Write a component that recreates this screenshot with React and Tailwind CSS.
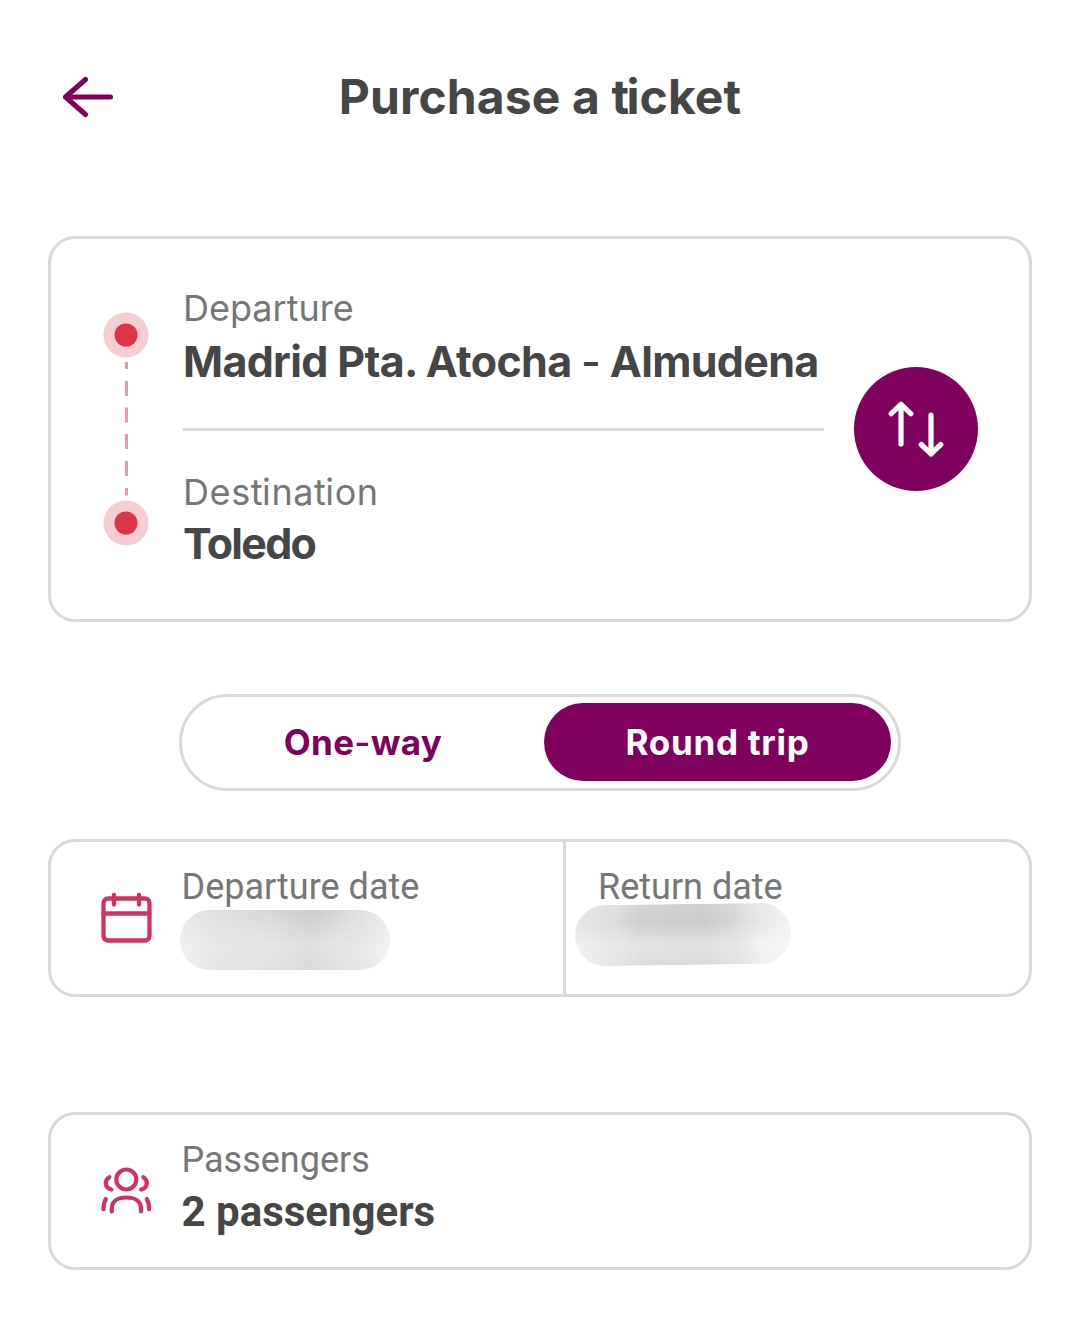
function BackArrow() {
  return (
    <svg className="w-[52px] h-[42px]" viewBox="0 0 52 42" fill="none" stroke="#80005e" strokeWidth="5" strokeLinecap="round" strokeLinejoin="round">
      <path d="M48.500 21H3.500M23.500 3.500L3.500 21l20 17.500" />
    </svg>
  );
}

function RouteLine() {
  return (
    <svg className="w-[46px] h-[234px]" viewBox="0 0 46 234" fill="none">
      <circle cx="23" cy="23" r="22.5" fill="#f6cdd2" />
      <circle cx="23" cy="23" r="11.5" fill="#dc3545" />
      <path
        d="M23.5 50v7M23.5 69v15M23.5 95.5v15M23.5 122v15M23.5 149v15M23.5 176v7.5"
        stroke="#e29fa5"
        strokeWidth="3"
      />
      <circle cx="23" cy="211" r="22.5" fill="#f6cdd2" />
      <circle cx="23" cy="211" r="11.5" fill="#dc3545" />
    </svg>
  );
}

function SwapIcon() {
  return (
    <svg className="w-[56px] h-[56px]" viewBox="0 0 56 56" fill="none" stroke="#ffffff" strokeWidth="5.2" strokeLinecap="round" strokeLinejoin="round">
      <path d="M13 43V4M3.2 12.700L13 3.300l9.800 9.400" />
      <path d="M43 14v39M33.2 43.500l9.800 9.400 9.800-9.400" />
    </svg>
  );
}

function CalendarIcon() {
  return (
    <svg className="w-[52px] h-[52px]" viewBox="0 0 52 52" fill="none" stroke="#d03363" strokeWidth="4.3" strokeLinecap="round">
      <rect x="3.5" y="6.5" width="46" height="42" rx="4.5" />
      <path d="M3.500 21.500h46M14 3V12.500M39 3V12.500" />
    </svg>
  );
}

function PeopleIcon() {
  return (
    <svg className="w-[52px] h-[48px]" viewBox="0 0 52 48" fill="none" stroke="#d03363" strokeWidth="4.2" strokeLinecap="round">
      <circle cx="26.3" cy="12.500" r="10" />
      <path d="M11.800 44.500v-3C11.800 34 18 30.500 26.300 30.500S41 34 41 41.500v3" />
      <path d="M9.300 10.200c-5 3-5 10.500 2.200 12.300M43.300 10.200c5 3 5 10.500-2.200 12.300" />
      <path d="M5.800 32C4 35 3.500 38 3.500 42.200M46.800 32c1.800 3 2.300 6 2.300 10.200" />
    </svg>
  );
}

export default function App() {
  return (
    <div className="w-[1080px] h-[1331px] bg-white px-12 text-[#464646] font-['Inter',sans-serif]">
      <header className="grid grid-cols-[120px_1fr_120px] items-center pt-[66px]">
        <button className="pl-[14px]">
          <BackArrow />
        </button>
        <h1 className="text-center text-[48px] leading-[62px] font-bold tracking-[0.1px] whitespace-nowrap">
          Purchase a <span className="tracking-[-2.5px]">t</span>icket
        </h1>
      </header>

      <section className="mt-[108px] flex h-[386px] rounded-[27px] border-3 border-[#d9d9d9] pl-[52px] pr-[51px]">
        <div className="mt-[73px] w-[80px]">
          <RouteLine />
        </div>
        <div className="w-[641px] pt-[47px]">
          <p className="text-[36px] leading-[44px] text-[#777777] whitespace-nowrap">Departure</p>
          <p className="mt-[5px] text-[43px] leading-[52px] font-bold tracking-[-0.67px] whitespace-nowrap">
            Madrid Pta. Atocha <span className="font-medium">-</span> Almudena
          </p>
          <hr className="mt-[41px] border-t-3 border-[#d9d9d9]" />
          <p className="mt-[39px] text-[36px] leading-[44px] tracking-[0.6px] text-[#777777] whitespace-nowrap">
            Des<span className="tracking-[-0.5px]">t</span>ina<span className="tracking-[-0.5px]">t</span>ion
          </p>
          <p className="mt-[3px] text-[43px] leading-[52px] font-bold tracking-[-1.7px]">Toledo</p>
        </div>
        <button className="ml-auto flex size-[124px] items-center justify-center self-center rounded-full bg-[#80005e]">
          <SwapIcon />
        </button>
      </section>

      <div className="mx-auto mt-[72px] flex h-[97px] w-[722px] rounded-full border-3 border-[#d9d9d9] pt-[6px] pr-[7px] text-[35px] leading-[44px] font-bold">
        <button className="h-[78px] w-[362px] tracking-[0.3px] text-[#80005e]">
          One<span className="font-medium">-</span>way
        </button>
        <button className="h-[78px] w-[347px] rounded-full bg-[#80005e] tracking-[0.7px] text-white">Round trip</button>
      </div>

      <section className="mt-[48px] flex h-[158px] rounded-[27px] border-3 border-[#d9d9d9] font-['Roboto',sans-serif] text-[36px] leading-[44px] text-[#777777]">
        <div className="flex w-[515px] border-r-3 border-[#d9d9d9] pl-[49px]">
          <div className="mt-[50px] w-[81.5px]">
            <CalendarIcon />
          </div>
          <div className="pt-[23px]">
            <p>Departure date</p>
            <div className="-ml-[2px] mt-[1px] h-[60px] w-[210px] rounded-full bg-[linear-gradient(to_bottom,rgba(255,255,255,0),rgba(255,255,255,0.35)_60%,rgba(255,255,255,0.25)),linear-gradient(to_right,#ebe7e8,#dcdcdc_22%,#d6d6d6_45%,#cccccc_62%,#d6d6d6_75%,#ebebeb)]" />
          </div>
        </div>
        <div className="pl-[32px] pt-[23px]">
          <p>Return date</p>
          <div className="-ml-[23px] -mt-[5px] h-[61px] w-[216px] rotate-[-0.8deg] rounded-full bg-[linear-gradient(to_bottom,rgba(255,255,255,0.1),rgba(255,255,255,0)_30%,rgba(255,255,255,0.4)_65%,rgba(255,255,255,0.3)),linear-gradient(to_right,#e8e8e8,#dadada_20%,#cfcfcf_30%,#cbcbcb_60%,#d6d6d6_74%,#e9e9e9_86%,#f1f1f1)]" />
        </div>
      </section>

      <section className="mt-[115px] flex h-[158px] rounded-[27px] border-3 border-[#d9d9d9] pl-[49px] font-['Roboto',sans-serif]">
        <div className="mt-[52px] w-[81.5px]">
          <PeopleIcon />
        </div>
        <div className="pt-[23px]">
          <p className="text-[36px] leading-[44px] text-[#777777]">Passengers</p>
          <p className="mt-[5px] text-[42px] leading-[50px] font-bold">2 passengers</p>
        </div>
      </section>
    </div>
  );
}
